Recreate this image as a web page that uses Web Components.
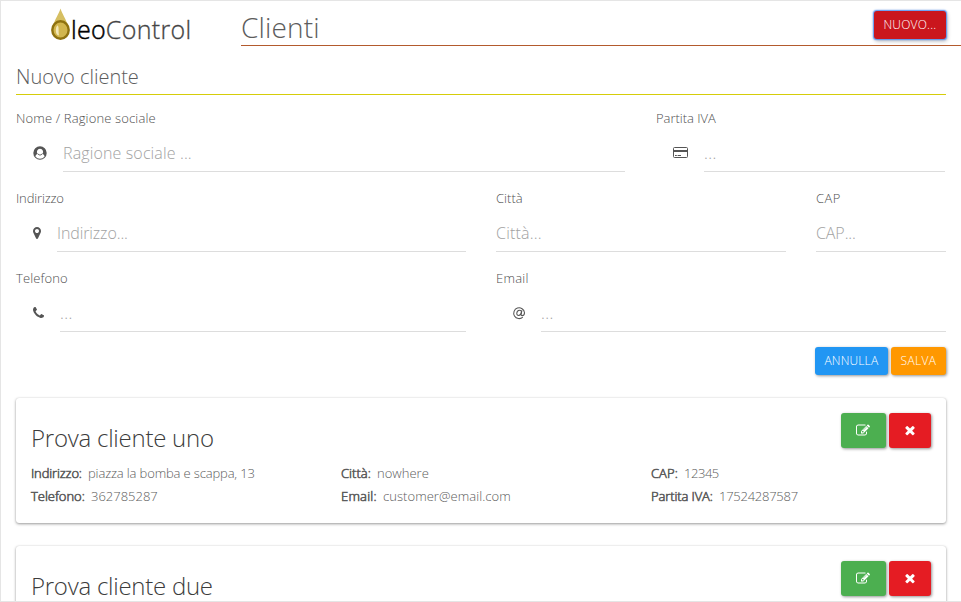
<!DOCTYPE html>
<html lang="it">
<head>
<meta charset="utf-8">
<title>OleoControl - Clienti</title>
<style>
body{margin:0;background:#fff;font-family:"Open Sans","Noto Sans",sans-serif;font-weight:300;color:#5c5c5c;overflow:hidden}
</style>
</head>
<body>
<oleo-app></oleo-app>
<script>
const define=(name,html,init)=>customElements.define(name,class extends HTMLElement{
  connectedCallback(){
    if(this.shadowRoot)return;
    const t=document.createElement('template');
    t.innerHTML=typeof html==='function'?html(this):html;
    this.attachShadow({mode:'open'}).append(t.content.cloneNode(true));
    if(init)init(this);
  }
});

// Single line of text whose tracking is adjusted to fill the given width.
define('fit-text',`<style>:host{display:inline-block;white-space:pre}span{display:inline-block}</style><span><slot></slot></span>`,el=>{
  const s=el.shadowRoot.querySelector('span'),w=+el.getAttribute('w');
  const n=el.textContent.length;
  el.style.width=w+'px';
  s.style.letterSpacing=((w-.2-s.getBoundingClientRect().width)/n)+'px';
});

const icons={
  user:[14,14,'<path fill-rule="evenodd" d="M7 .3a6.700 6.700 0 1 1 0 13.400A6.700 6.700 0 0 1 7 .3zM7 2.800a3.100 3.100 0 0 0-2.200 5.300C3.500 8.300 2.700 9.300 2.400 10.500a5.700 5.700 0 0 0 9.200 0C11.300 9.300 10.500 8.300 9.200 8.100A3.100 3.100 0 0 0 7 2.800z"/><path d="M4.900 8.100Q7 10.300 9.100 8.100" fill="none" stroke="currentColor" stroke-width=".9"/>'],
  card:[15,12,'<rect x=".5" y=".5" width="14" height="10" rx="1" fill="none" stroke="currentColor"/><path d="M.5 3h14v2H.5zM2 8h1.800v1H2zM4.600 8H8v1H4.600z"/>'],
  pin:[8,14,'<g transform="translate(-3 0) scale(.0078125)"><path d="M1152 640q0-106-75-181t-181-75-181 75-75 181 75 181 181 75 181-75 75-181zm256 0q0 109-33 179l-364 774q-16 33-47.500 52t-67.500 19-67.500-19-46.500-52l-365-774q-33-70-33-179 0-212 150-362t362-150 362 150 150 362z"/></g>'],
  phone:[11,14,'<g transform="translate(-1.500 0) scale(.0078125)"><path d="M1600 1240q0 27-10 70.500t-21 68.500q-21 50-122 106-94 51-186 51-27 0-53-3.500t-57.500-12.500-47-14.500-55.500-20.500-49-18q-98-35-175-83-127-79-264-216t-216-264q-48-77-83-175-3-9-18-49t-20.500-55.500-14.500-47-12.500-57.500-3.500-53q0-92 51-186 56-101 106-122 25-11 68.500-21t70.500-10q14 0 21 3 18 6 53 76 11 19 30 54t35 63.500 31 53.500q3 4 17.500 25t21.500 35.500 7 28.500q0 20-28.500 50t-62 55-62 53-28.500 46q0 9 5 22.500t8.500 20.500 14 24 11.500 19q76 137 174 235t235 174q2 1 19 11.500t24 14 20.500 8.500 22.500 5q18 0 46-28.500t53-62 55-62 50-28.500q14 0 28.500 7t35.500 21.500 25 17.500q25 15 53.500 31t63.500 35 54 30q70 35 76 53 3 7 3 21z"/></g>'],
  at:[12,12,'<g fill="none" stroke="currentColor" stroke-width="1.050"><path d="M9.800 10.200A5.400 5.400 0 1 1 11.500 5.700C11.500 7.600 10.300 8.600 9.200 8.600 8.300 8.600 7.900 8.100 8.100 7.300L8.900 3.300"/><path d="M8.400 5.100C8.200 7 7 8.400 5.600 8.400 4.400 8.400 3.700 7.600 3.800 6.300 3.900 4.600 5.100 3.200 6.500 3.200 7.700 3.200 8.500 4 8.400 5.100z"/></g>'],
  edit:[14,14,'<g transform="translate(-1 -.5) scale(.0078125)"><path d="M888 1184l116-116-152-152-116 116v56h96v96h56zm440-720q-16-16-33 1l-350 350q-17 17-1 33t33-1l350-350q17-17 1-33zm80 594v190q0 119-84.500 203.500t-203.500 84.500h-832q-119 0-203.500-84.500t-84.500-203.500v-832q0-119 84.500-203.500t203.500-84.500h832q63 0 117 25 15 7 18 23 3 17-9 29l-49 49q-14 14-32 8-23-6-45-6h-832q-66 0-113 47t-47 113v832q0 66 47 113t113 47h832q66 0 113-47t47-113v-126q0-13 9-22l64-64q15-15 35-7t20 29zm-96-738l288 288-672 672h-288v-288zm444 132l-92 92-288-288 92-92q28-28 68-28t68 28l152 152q28 28 28 68t-28 68z"/></g>'],
  times:[14,14,'<g transform="translate(0 -.8) scale(.0078125)"><path d="M1490 1322q0 40-28 68l-136 136q-28 28-68 28t-68-28l-294-294-294 294q-28 28-68 28t-68-28l-136-136q-28-28-28-68t28-68l294-294-294-294q-28-28-28-68t28-68l136-136q28-28 68-28t68 28l294 294 294-294q28-28 68-28t68 28l136 136q28 28 28 68t-28 68l-294 294 294 294q28 28 28 68z"/></g>']
};
define('fa-icon',el=>{const [w,h,b]=icons[el.getAttribute('name')];
  return `<style>:host{display:block;flex:none}svg{display:block;fill:currentColor;overflow:visible}</style><svg width="${w}" height="${h}" viewBox="0 0 ${w} ${h}">${b}</svg>`;});

define('oleo-logo',`<style>
:host{display:flex;align-items:flex-start;width:190px;height:46px;padding-left:49px;box-sizing:border-box;flex:none;font-size:25px;line-height:34px}
svg{display:block;flex:none;margin-top:7px}
fit-text{margin-top:11px}.a{color:#000;-webkit-text-stroke:.5px #000}.b{color:#444;-webkit-text-stroke:.3px #444}
</style>
<svg width="21" height="33" viewBox="0 0 21 33"><path d="M10.500 0.500C12 6 16.300 11 17.800 18a8 8 0 0 1-3.800 11.500c-2 1.200-5 1.200-7 0A8 8 0 0 1 3.200 18C4.700 11 9 6 10.500.5z" fill="#d6bf62"/><ellipse cx="10.500" cy="22" rx="8.200" ry="8.700" fill="#d2b64e" stroke="#8f7210" stroke-width="2.400"/><path d="M7.200 17.500q1.500 0 1.400 4t.4 6q-3.200-.5-3.200-5.500 0-3 1.400-4.500z" fill="#f3e8b8"/></svg>
<fit-text class="a" w="35">leo</fit-text><fit-text class="b" w="86">Control</fit-text>`);

define('ui-button',`<style>
:host{display:flex;align-items:center;justify-content:center;box-sizing:border-box;border-radius:3px;color:#fff;font-size:12px;line-height:18px;box-shadow:1px 1px 3px rgba(0,0,0,.42);height:28px;width:var(--w);background:var(--bg);flex:none}
:host([focused]){box-shadow:0 0 1.500px .5px #4e8df0,1px 2px 4px rgba(0,0,0,.3)}
:host([large]){height:35px}
</style><slot></slot>`);

define('form-field',el=>{const i=el.getAttribute('icon');return `<style>
:host{display:block;box-sizing:border-box;height:80px;padding:0 var(--pr,15px) 0 15px;grid-column:span var(--span)}
.l{height:27px;font-size:13px;line-height:19px;color:#505050}
.c{display:flex;height:36px}
.i{display:flex;align-items:center;padding:0 16px 2px 17px;color:#555}
.p{flex:1;box-sizing:border-box;border-bottom:1px solid #ddd;font-size:16px;line-height:35px;color:#a2a2a2;overflow:hidden}
</style><div class="l"><slot name="label"></slot></div><div class="c">${i?`<div class="i"><fa-icon name="${i}"></fa-icon></div>`:''}<div class="p"><slot></slot></div></div>`;});

define('data-item',`<style>:host{display:flex;gap:6px;font-size:13px;line-height:23px;color:#5c5c5c}::slotted([slot=k]){-webkit-text-stroke:.6px #5c5c5c}</style><slot name="k"></slot><slot></slot>`);

define('client-card',`<style>
:host{display:block;box-sizing:border-box;height:125px;margin:0 15px 23px;padding:15px;border-radius:3px;background:#fff;box-shadow:0 1px 3px rgba(0,0,0,.4),0 0 1px rgba(0,0,0,.15)}
.h{display:flex;justify-content:space-between;height:49px}
.t{font-size:24px;line-height:49px;color:#3c3c3c}
.b{display:flex;gap:3px}
.g{display:grid;grid-template-columns:310px 310px 1fr}
</style><div class="h"><div class="t"><slot name="title"></slot></div><div class="b"><ui-button large style="--w:45px;--bg:#4caf50"><fa-icon name="edit"></fa-icon></ui-button><ui-button large style="--w:42px;--bg:#e51c23"><fa-icon name="times"></fa-icon></ui-button></div></div><div class="g"><slot></slot></div>`);

define('oleo-app',`<style>
:host{display:block;box-sizing:border-box;width:961px;height:602px;border:solid #e5e5e5;border-width:1px 0 1px 1px;overflow:hidden}
header{display:flex;height:45px}
.t{flex:1;display:flex;justify-content:space-between;margin-left:50px;padding-right:15px;border-bottom:1px solid #b35a2d;box-sizing:border-box;font-size:28px;line-height:53px}
.t ui-button{margin-top:10px}
h2{font-weight:300;font-size:20px;line-height:36px;margin:13px 15px 0;height:35px;border-bottom:1px solid #d5cd0a;display:flex}
form{display:grid;grid-template-columns:repeat(12,80px);margin-top:14px}
.a{display:flex;justify-content:flex-end;gap:3px;height:51px;margin:-2px 15px 0 0}
</style>
<header><oleo-logo></oleo-logo><div class="t"><fit-text w="79">Clienti</fit-text><ui-button focused style="--w:72px;--bg:#ca161d"><fit-text w="53">NUOVO...</fit-text></ui-button></div></header>
<h2><fit-text w="123">Nuovo cliente</fit-text></h2>
<form>
<form-field style="--span:8;--pr:16px" icon="user"><fit-text slot="label" w="140">Nome / Ragione sociale</fit-text><fit-text w="129">Ragione sociale ...</fit-text></form-field>
<form-field style="--span:4;--pr:16px" icon="card"><fit-text slot="label" w="60">Partita IVA</fit-text><fit-text w="13">...</fit-text></form-field>
<form-field style="--span:6" icon="pin"><fit-text slot="label" w="48">Indirizzo</fit-text><fit-text w="71">Indirizzo...</fit-text></form-field>
<form-field style="--span:4"><fit-text slot="label" w="27">Città</fit-text><fit-text w="46">Città...</fit-text></form-field>
<form-field style="--span:2"><fit-text slot="label" w="25">CAP</fit-text><fit-text w="40">CAP...</fit-text></form-field>
<form-field style="--span:6" icon="phone"><fit-text slot="label" w="52">Telefono</fit-text><fit-text w="13">...</fit-text></form-field>
<form-field style="--span:6" icon="at"><fit-text slot="label" w="33">Email</fit-text><fit-text w="13">...</fit-text></form-field>
</form>
<div class="a"><ui-button style="--w:73px;--bg:#2196f3"><fit-text w="54">ANNULLA</fit-text></ui-button><ui-button style="--w:55px;--bg:#ff9800"><fit-text w="36">SALVA</fit-text></ui-button></div>
<client-card><fit-text slot="title" w="183">Prova cliente uno</fit-text>
<data-item><fit-text slot="k" w="51">Indirizzo:</fit-text><fit-text w="167">piazza la bomba e scappa, 13</fit-text></data-item>
<data-item><fit-text slot="k" w="30">Città:</fit-text><fit-text w="52">nowhere</fit-text></data-item>
<data-item><fit-text slot="k" w="27">CAP:</fit-text><fit-text w="35">12345</fit-text></data-item>
<data-item><fit-text slot="k" w="54">Telefono:</fit-text><fit-text w="67">362785287</fit-text></data-item>
<data-item><fit-text slot="k" w="36">Email:</fit-text><fit-text w="128">customer@email.com</fit-text></data-item>
<data-item><fit-text slot="k" w="62">Partita IVA:</fit-text><fit-text w="79">17524287587</fit-text></data-item>
</client-card>
<client-card><fit-text slot="title" w="182">Prova cliente due</fit-text></client-card>`);
</script>
</body>
</html>
